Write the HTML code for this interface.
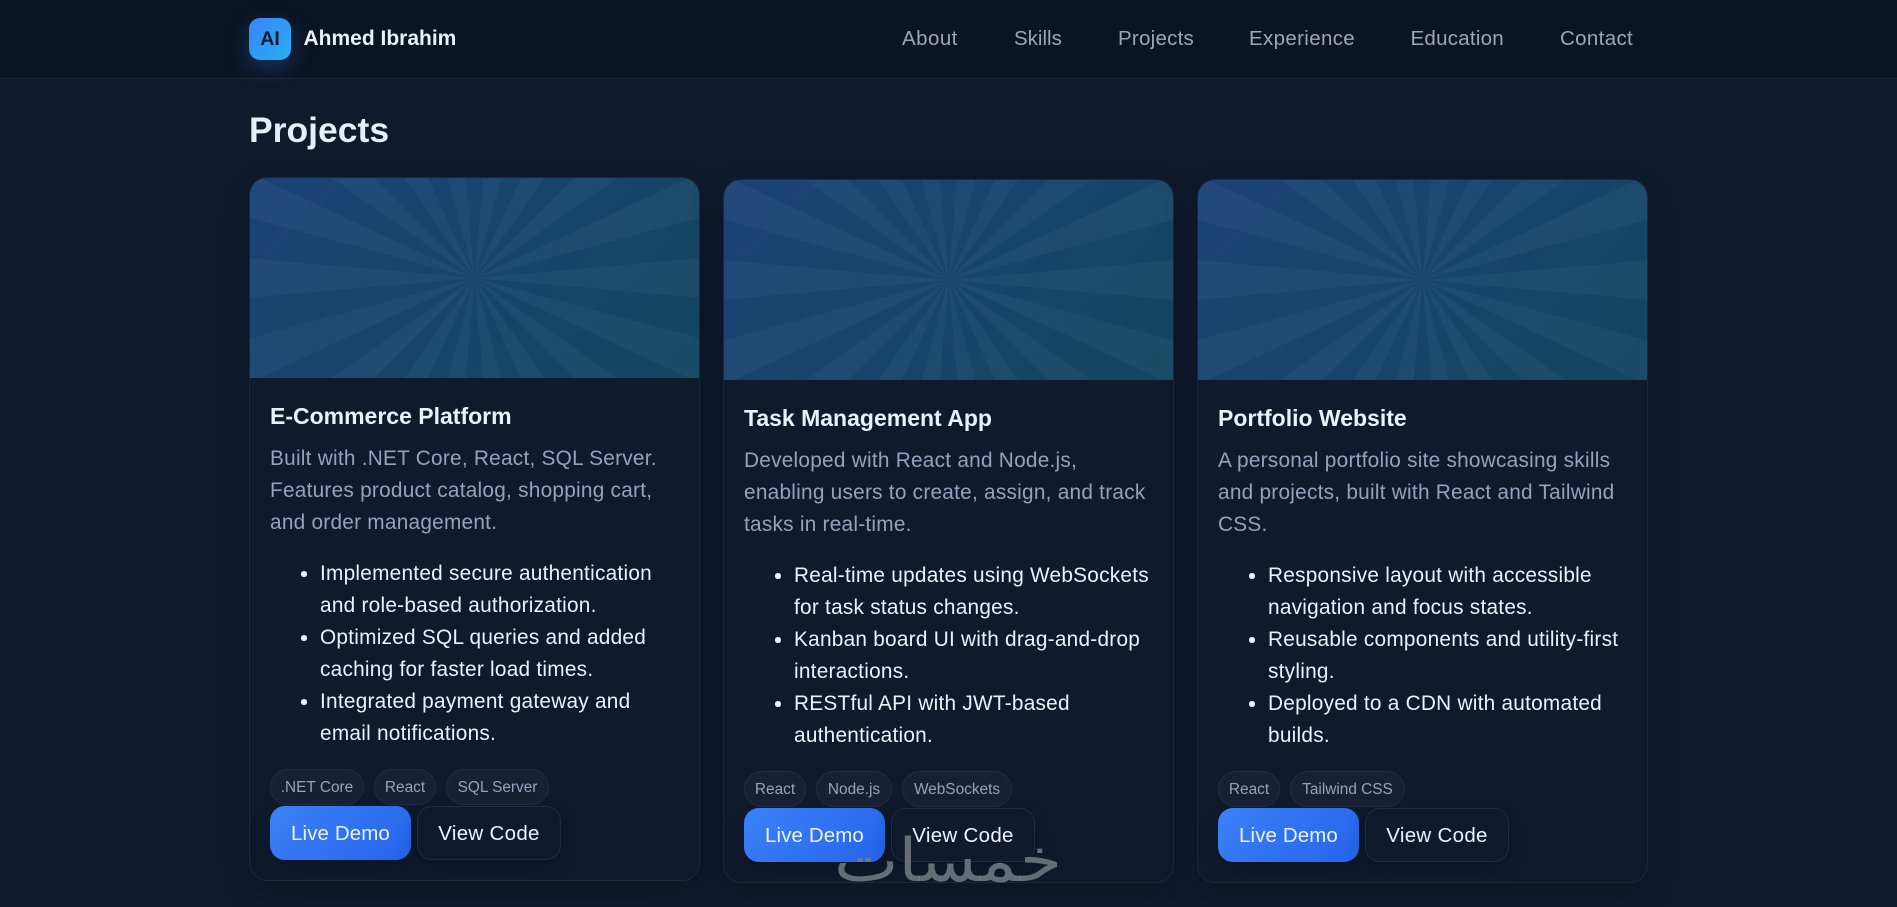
<!DOCTYPE html>
<html lang="en">
<head>
<meta charset="utf-8">
<title>Ahmed Ibrahim - Projects</title>
<style>
*{box-sizing:border-box;margin:0;padding:0}
html,body{width:1897px;height:907px;overflow:hidden}
body{position:relative;background:#0f1a2d;font-family:"Liberation Sans",sans-serif;color:#eaf1fa}
header{position:absolute;left:0;top:0;width:1897px;height:79px;background:#0b1423;border-bottom:1px solid #1a2434}
.tile{position:absolute;left:249px;top:18px;width:42px;height:42px;border-radius:11px;background:linear-gradient(135deg,#3b82f6,#27b0f5);box-shadow:0 8px 22px rgba(59,130,246,.28);color:#0b1a33;font-weight:700;font-size:19.5px;line-height:42px;text-align:center}
.brand{position:absolute;left:303.5px;top:0;line-height:78px;font-size:21px;font-weight:700;color:#e8f0fa}
nav a{position:absolute;top:0;line-height:78px;font-size:20.5px;color:#9aa7bb;text-decoration:none;white-space:nowrap}
h1{position:absolute;left:249px;top:110px;font-size:35.5px;line-height:40px;font-weight:700;color:#e6eef8}
.card{position:absolute;width:450.5px;height:704px;background:#0f1a2d;border:1px solid #1c2738;border-radius:18px;box-shadow:0 12px 34px rgba(0,0,0,.2);overflow:hidden}
.img{position:absolute;left:0;top:0;width:100%;height:200px;background:repeating-conic-gradient(from 5deg,rgba(190,225,255,.042) 0 10deg,rgba(255,255,255,0) 10deg 20deg),linear-gradient(135deg,#1c4276,#13465f)}
h3{position:absolute;left:20px;top:223px;font-size:23px;line-height:30px;font-weight:700;color:#eaf1fa;white-space:nowrap}
p{position:absolute;left:20px;top:264.6px;font-size:20.8px;line-height:32px;letter-spacing:.25px;color:#94a3bd;white-space:nowrap}
ul{position:absolute;left:70px;top:380px;list-style:none;font-size:20.8px;line-height:32px;letter-spacing:.25px;color:#eaf1fa;white-space:nowrap}
li{position:relative}
li::before{content:"";position:absolute;left:-19px;top:13px;width:5.5px;height:5.5px;border-radius:50%;background:#eaf1fa}
.tag{position:absolute;top:591px;height:36px;line-height:36px;text-align:center;border:1px solid #222d3f;border-radius:18px;background:#172133;color:#94a3bd;font-size:15.4px;white-space:nowrap}
.btn{position:absolute;top:627.5px;height:54px;line-height:54px;text-align:center;border-radius:15px;font-size:20.5px;white-space:nowrap;color:#eaf2ff}
.live{width:141px;left:20px;background:linear-gradient(135deg,#3b82f6,#2563eb);line-height:56px;letter-spacing:.1px;box-shadow:0 8px 20px rgba(0,0,0,.22)}
.code{width:144px;left:167px;border:1px solid #212c3e;background:#0f1a2d;letter-spacing:.3px;box-shadow:0 8px 20px rgba(0,0,0,.22)}
.wm{position:absolute;left:833px;top:826px;width:230px;text-align:center;font-family:"DejaVu Sans",sans-serif;font-weight:400;font-size:60px;line-height:70px;color:rgba(118,125,134,.85);white-space:nowrap;pointer-events:none;transform:scaleX(1.14)}
</style>
</head>
<body>
<header>
  <div class="tile">AI</div>
  <div class="brand">Ahmed Ibrahim</div>
  <nav>
    <a href="#about" style="left:902px;letter-spacing:.45px">About</a>
    <a href="#skills" style="left:1014px">Skills</a>
    <a href="#projects" style="left:1118px;letter-spacing:.25px">Projects</a>
    <a href="#experience" style="left:1249px;letter-spacing:.35px">Experience</a>
    <a href="#education" style="left:1410.5px;letter-spacing:.25px">Education</a>
    <a href="#contact" style="left:1560px;letter-spacing:.35px">Contact</a>
  </nav>
</header>
<h1>Projects</h1>

<section class="card" style="left:249px;top:177px">
  <div class="img"></div>
  <h3>E-Commerce Platform</h3>
  <p>Built with .NET Core, React, SQL Server.<br>Features product catalog, shopping cart,<br>and order management.</p>
  <ul>
    <li>Implemented secure authentication<br>and role-based authorization.</li>
    <li>Optimized SQL queries and added<br>caching for faster load times.</li>
    <li>Integrated payment gateway and<br>email notifications.</li>
  </ul>
  <span class="tag" style="left:20px;width:94px">.NET Core</span>
  <span class="tag" style="left:124px;width:62px">React</span>
  <span class="tag" style="left:196px;width:103px">SQL Server</span>
  <a class="btn live">Live Demo</a>
  <a class="btn code">View Code</a>
</section>

<section class="card" style="left:723px;top:179px">
  <div class="img"></div>
  <h3>Task Management App</h3>
  <p>Developed with React and Node.js,<br>enabling users to create, assign, and track<br>tasks in real-time.</p>
  <ul>
    <li>Real-time updates using WebSockets<br>for task status changes.</li>
    <li>Kanban board UI with drag-and-drop<br>interactions.</li>
    <li>RESTful API with JWT-based<br>authentication.</li>
  </ul>
  <span class="tag" style="left:20px;width:62px">React</span>
  <span class="tag" style="left:92px;width:76px">Node.js</span>
  <span class="tag" style="left:178px;width:110px">WebSockets</span>
  <a class="btn live">Live Demo</a>
  <a class="btn code">View Code</a>
</section>

<section class="card" style="left:1197px;top:179px">
  <div class="img"></div>
  <h3>Portfolio Website</h3>
  <p>A personal portfolio site showcasing skills<br>and projects, built with React and Tailwind<br>CSS.</p>
  <ul>
    <li>Responsive layout with accessible<br>navigation and focus states.</li>
    <li>Reusable components and utility-first<br>styling.</li>
    <li>Deployed to a CDN with automated<br>builds.</li>
  </ul>
  <span class="tag" style="left:20px;width:62px">React</span>
  <span class="tag" style="left:92px;width:115px">Tailwind CSS</span>
  <a class="btn live">Live Demo</a>
  <a class="btn code">View Code</a>
</section>

<div class="wm" dir="rtl">خمسات</div>
</body>
</html>
